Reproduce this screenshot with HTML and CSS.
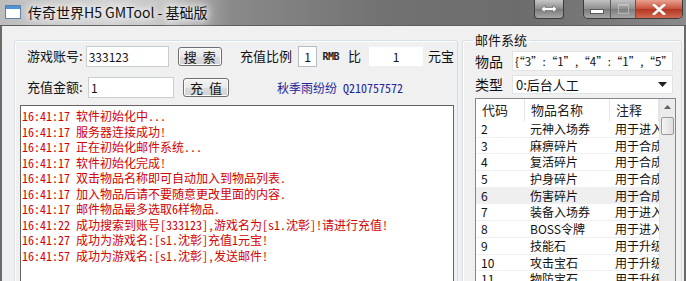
FILE: index.html
```html
<!DOCTYPE html>
<html lang="zh-CN">
<head>
    <meta charset="UTF-8">
    <meta name="viewport" content="width=device-width, initial-scale=1.0">
    <title>传奇世界H5 GMTool - 基础版</title>
    <link rel="stylesheet" href="styles.css">
</head>
<body>
    <div class="window">
        <!-- Title bar -->
        <div class="titlebar">
            <svg class="app-icon" width="16" height="16" viewBox="0 0 16 16">
                <rect x="0.5" y="1.5" width="15" height="13" fill="#ffffff" stroke="#5a7fa8"/>
                <rect x="1" y="2" width="14" height="3" fill="#4f94d8"/>
            </svg>
            <span class="title">传奇世界H5 GMTool - 基础版</span>
            <div class="caption-btn swap">
                <svg width="18" height="8" viewBox="0 0 18 8">
                    <path d="M1 4 L5 0.5 L5 2.5 L13 2.5 L13 0.5 L17 4 L13 7.5 L13 5.5 L5 5.5 L5 7.5 Z" fill="#ffffff" stroke="#5a5a5a" stroke-width="0.6"/>
                </svg>
            </div>
            <div class="caption-group">
                <div class="caption-btn min"><span class="min-bar"></span></div>
                <div class="caption-btn max"><span class="max-box"></span></div>
                <div class="caption-btn close">
                    <svg width="14" height="11" viewBox="0 0 14 11">
                        <path d="M2 1 L12 10 M12 1 L2 10" stroke="#ffffff" stroke-width="2.6" stroke-linecap="square"/>
                    </svg>
                </div>
            </div>
        </div>

        <div class="client">
            <!-- Left: account / recharge -->
            <fieldset class="group left-group">
                <div class="form-row">
                    <span class="label">游戏账号:</span>
                    <span class="textbox account">333123</span>
                    <button class="btn">搜&nbsp;&nbsp;索</button>
                    <span class="label ratio-label">充值比例</span>
                    <span class="textbox tiny">1</span>
                    <span class="rmb">RMB</span>
                    <span class="label bi">比</span>
                    <span class="textbox ratio">1</span>
                    <span class="label yb">元宝</span>
                </div>
                <div class="form-row second">
                    <span class="label">充值金额:</span>
                    <span class="textbox account">1</span>
                    <button class="btn">充&nbsp;&nbsp;值</button>
                    <span class="author">秋季雨纷纷 Q210757572</span>
                </div>
                <div class="log">
                    <div class="log-line">16:41:17 软件初始化中...</div>
                    <div class="log-line">16:41:17 服务器连接成功!</div>
                    <div class="log-line">16:41:17 正在初始化邮件系统...</div>
                    <div class="log-line">16:41:17 软件初始化完成!</div>
                    <div class="log-line">16:41:17 双击物品名称即可自动加入到物品列表.</div>
                    <div class="log-line">16:41:17 加入物品后请不要随意更改里面的内容.</div>
                    <div class="log-line">16:41:17 邮件物品最多选取6样物品.</div>
                    <div class="log-line">16:41:22 成功搜索到账号[333123],游戏名为[s1.沈彰]!请进行充值!</div>
                    <div class="log-line">16:41:27 成功为游戏名:[s1.沈彰]充值1元宝!</div>
                    <div class="log-line">16:41:57 成功为游戏名:[s1.沈彰],发送邮件!</div>
                </div>
            </fieldset>

            <!-- Right: mail system -->
            <fieldset class="group mail-group">
                <legend>邮件系统</legend>
                <div class="mail-row">
                    <span class="label">物品</span>
                    <span class="textbox items">{“3”:“1”,“4”:“1”,“5”:“1”,“6”:“1”}</span>
                </div>
                <div class="mail-row">
                    <span class="label">类型</span>
                    <div class="combo">
                        <span>0:后台人工</span>
                        <svg width="9" height="5" viewBox="0 0 9 5"><path d="M0 0 L9 0 L4.5 5 Z" fill="#222"/></svg>
                    </div>
                </div>
                <div class="listview">
                    <div class="list-body">
                        <div class="list-head">
                            <span>代码</span><span>物品名称</span><span>注释</span>
                        </div>
                        <div class="list-row"><span>2</span><span>元神入场券</span><span>用于进入场景</span></div>
                        <div class="list-row"><span>3</span><span>麻痹碎片</span><span>用于合成</span></div>
                        <div class="list-row"><span>4</span><span>复活碎片</span><span>用于合成</span></div>
                        <div class="list-row"><span>5</span><span>护身碎片</span><span>用于合成</span></div>
                        <div class="list-row hover"><span>6</span><span>伤害碎片</span><span>用于合成</span></div>
                        <div class="list-row"><span>7</span><span>装备入场券</span><span>用于进入场景</span></div>
                        <div class="list-row"><span>8</span><span>BOSS令牌</span><span>用于进入场景</span></div>
                        <div class="list-row"><span>9</span><span>技能石</span><span>用于升级</span></div>
                        <div class="list-row"><span>10</span><span>攻击宝石</span><span>用于升级</span></div>
                        <div class="list-row"><span>11</span><span>物防宝石</span><span>用于升级</span></div>
                    </div>
                    <div class="scrollbar">
                        <div class="arrow-up">
                            <svg width="7" height="4" viewBox="0 0 7 4"><path d="M0 4 L3.5 0 L7 4 Z" fill="#606060"/></svg>
                        </div>
                        <div class="thumb"></div>
                    </div>
                </div>
            </fieldset>
        </div>
    </div>
</body>
</html>
```

FILE: styles.css
```css
body {
    margin: 0;
    width: 686px;
    height: 281px;
    overflow: hidden;
    font-family: "Noto Sans CJK SC", "Noto Sans", sans-serif;
    background-color: #f0f0f0;
}
.window {
    display: flex;
    flex-direction: column;
    height: 281px;
}

/* title bar */
.titlebar {
    height: 25px;
    display: flex;
    align-items: flex-start;
    background: linear-gradient(to right, #bdbdbd 0, #d2d2d2 110px, #c4c4c4 170px, #8a8a8a 230px, #727272 380px, #6c6c6c 520px, #8a8a8a 686px);
    border-bottom: 1px solid #5e5e5e;
}
.app-icon {
    margin: 4px 0 0 5px;
}
.title {
    margin: 2px 0 0 7px;
    font-size: 14px;
    line-height: 20px;
    color: #111;
    text-shadow: 0 0 6px #ffffff, 0 0 10px #ffffff, 0 0 14px #f4f4f4;
}
.caption-btn {
    display: flex;
    align-items: center;
    justify-content: center;
    height: 18px;
}
.swap {
    margin-left: auto;
    width: 28px;
    border: 1px solid #3c3c3c;
    border-top: none;
    border-radius: 0 0 4px 4px;
    background: linear-gradient(#c6c6c6, #8c8c8c 50%, #7a7a7a 51%, #a8a8a8);
}
.caption-group {
    display: flex;
    margin: 0 3px 0 19px;
    border: 1px solid #3c3c3c;
    border-top: none;
    border-radius: 0 0 5px 5px;
    overflow: hidden;
}
.min, .max {
    width: 26px;
    border-right: 1px solid #5a5a5a;
    background: linear-gradient(#c2c2c2, #8e8e8e 50%, #7c7c7c 51%, #a6a6a6);
}
.max {
    width: 24px;
}
.min-bar {
    width: 12px;
    height: 3px;
    margin-top: 4px;
    background: #ffffff;
    border: 1px solid #5a5a5a;
}
.max-box {
    width: 9px;
    height: 7px;
    border: 1px solid #d0d0d0;
    border-top-width: 2px;
    opacity: 0.6;
}
.close {
    width: 46px;
    background: linear-gradient(#e8a090, #c8503a 50%, #b43622 51%, #d06a50);
}

/* client area */
.client {
    flex: 1;
    display: flex;
    align-items: flex-start;
    gap: 4px;
    padding: 7px 2px 0 12px;
    border-left: 2px solid #6a6a6a;
    border-right: 2px solid #6a6a6a;
    min-height: 0;
    overflow: hidden;
}
.group {
    margin: 0;
    padding: 0;
    min-width: 0;
    border: 1px solid #d5dfe5;
    border-radius: 3px;
    box-shadow: inset 1px 1px 0 #ffffff;
    height: 260px;
    box-sizing: border-box;
}
.left-group {
    width: 444px;
    flex: none;
    margin-top: 7px;
    padding: 4px 3px 0 5px;
}
.label {
    font-size: 13px;
    color: #111;
    line-height: 20px;
    white-space: nowrap;
}
.form-row {
    display: flex;
    align-items: center;
    height: 22px;
    margin-left: 7px;
}
.form-row.second {
    margin-top: 9px;
}
.form-row .label {
    width: 61px;
}
.textbox {
    box-sizing: border-box;
    height: 21px;
    background: #ffffff;
    border: 1px solid #c9cdd4;
    font-size: 12px;
    line-height: 19px;
    padding: 0 2px;
    color: #111;
    white-space: nowrap;
    overflow: hidden;
}
.account {
    width: 86px;
}
.btn {
    box-sizing: border-box;
    width: 46px;
    height: 19px;
    margin-left: 9px;
    padding: 0;
    font-family: inherit;
    font-size: 13px;
    line-height: 17px;
    color: #111;
    border: 1px solid #707070;
    border-radius: 3px;
    background: linear-gradient(#f4f4f4, #e8e8e8 50%, #dcdcdc 51%, #d2d2d2);
    box-shadow: inset 0 0 0 1px #fcfcfc;
}
.form-row .ratio-label {
    width: auto;
    margin-left: 18px;
}
.tiny {
    width: 20px;
    margin-left: 6px;
    text-align: center;
    border-color: #b8bcc4;
}
.rmb {
    margin-left: 5px;
    font-family: "DejaVu Sans Mono", monospace;
    font-size: 10px;
    font-weight: bold;
    color: #222;
    letter-spacing: -0.5px;
}
.form-row .bi {
    width: auto;
    margin-left: 9px;
}
.ratio {
    width: 58px;
    margin-left: 7px;
    text-align: center;
    border-color: #f0f0f0;
}
.form-row .yb {
    width: auto;
    margin-left: 4px;
}
.author {
    margin-left: 48px;
    font-family: "Noto Sans Mono CJK SC", "Noto Sans CJK SC", monospace;
    font-size: 12px;
    color: #23239a;
    white-space: nowrap;
}
.log {
    margin-top: 7px;
    height: 180px;
    background: #ffffff;
    border: 1px solid #646464;
    padding: 2px 0 0 1px;
    overflow: hidden;
}
.log-line {
    font-family: "Noto Sans Mono CJK SC", "Noto Sans CJK SC", monospace;
    font-size: 12px;
    line-height: 15.5px;
    color: #d40000;
    white-space: nowrap;
}

/* mail system */
.mail-group {
    width: 220px;
    flex: none;
    padding: 0 7px 0 12px;
}
.mail-group legend {
    margin-left: -2px;
    padding: 0 2px;
    font-size: 13px;
    line-height: 14px;
    color: #111;
}
.mail-row {
    display: flex;
    align-items: center;
    gap: 9px;
    height: 20px;
    margin-top: 4px;
}
.mail-row + .mail-row {
    margin-top: 3px;
}
.mail-row .label {
    font-size: 14px;
}
.items {
    width: 161px;
    height: 20px;
    font-size: 11.5px;
    border-color: #e2e3e6;
}
.combo {
    box-sizing: border-box;
    width: 161px;
    height: 19px;
    display: flex;
    align-items: center;
    justify-content: space-between;
    padding: 0 5px 0 3px;
    background: #ffffff;
    border: 1px solid #e2e3e6;
    font-size: 13px;
    color: #111;
}
.listview {
    display: flex;
    margin-top: 4px;
    width: 199px;
    height: 190px;
    border: 1px solid #828790;
    background: #ffffff;
    overflow: hidden;
}
.list-body {
    flex: 1;
    overflow: hidden;
}
.list-head, .list-row {
    display: grid;
    grid-template-columns: 49px 85px 1fr;
}
.list-head {
    height: 22px;
    font-size: 13px;
    line-height: 21px;
    color: #222;
}
.list-head span {
    padding-left: 6px;
    border-right: 1px solid #e5e5e5;
    white-space: nowrap;
}
.list-row {
    height: 16.7px;
    font-size: 12px;
    line-height: 16.7px;
    color: #111;
    box-shadow: inset 0 -1px 0 #f0f0f0;
}
.list-row span {
    padding-left: 5px;
    white-space: nowrap;
    overflow: hidden;
}
.list-row.hover {
    background: #efefef;
}
.scrollbar {
    width: 15px;
    background: #ebebeb;
    border-left: 1px solid #e2e2e2;
}
.arrow-up {
    height: 16px;
    display: flex;
    align-items: center;
    justify-content: center;
}
.thumb {
    margin: 2px 1px 0 1px;
    height: 16px;
    border: 1px solid #9a9a9a;
    border-radius: 2px;
    background: linear-gradient(to right, #f4f4f4, #dedede);
}
```
